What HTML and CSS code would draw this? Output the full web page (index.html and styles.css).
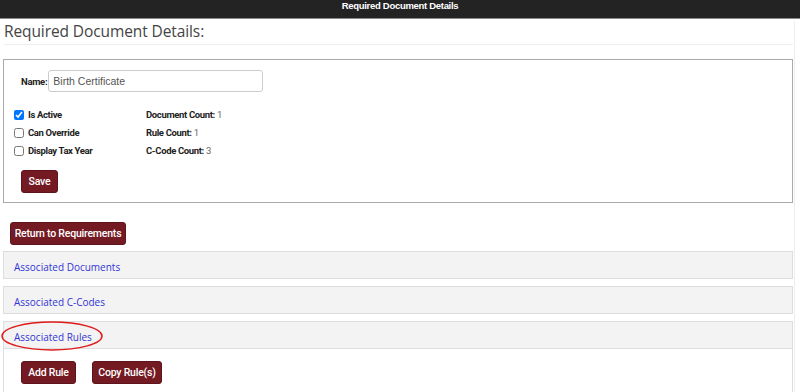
FILE: index.html
```html
<!DOCTYPE html>
<html>
<head>
<meta charset="utf-8">
<link rel="stylesheet" href="styles.css">
</head>
<body>
<header class="topbar">Required Document Details</header>
<main class="page">
  <h1 class="title">Required Document Details:</h1>
  <section class="card">
    <div class="name-row">
      <label class="lbl" for="name">Name:</label>
      <input id="name" class="text-input" type="text" value="Birth Certificate">
    </div>
    <div class="grid">
      <div class="col">
        <label class="check"><input type="checkbox" checked><span>Is Active</span></label>
        <label class="check"><input type="checkbox"><span>Can Override</span></label>
        <label class="check"><input type="checkbox"><span>Display Tax Year</span></label>
      </div>
      <div class="col counts">
        <div class="count"><b>Document Count:</b> 1</div>
        <div class="count"><b>Rule Count:</b> 1</div>
        <div class="count"><b>C-Code Count:</b> 3</div>
      </div>
    </div>
    <button class="btn save">Save</button>
  </section>
  <button class="btn ret">Return to Requirements</button>
  <div class="panel"><div class="panel-head"><a href="#">Associated Documents</a></div></div>
  <div class="panel"><div class="panel-head"><a href="#">Associated C-Codes</a></div></div>
  <div class="panel open">
    <div class="panel-head"><a href="#">Associated Rules</a>
      <svg class="circle" width="104" height="32" viewBox="0 0 104 32"><ellipse cx="51" cy="16" rx="50" ry="14" fill="none" stroke="#e01b1b" stroke-width="1.5"/></svg>
    </div>
    <div class="panel-body">
      <button class="btn add">Add Rule</button>
      <button class="btn copy">Copy Rule(s)</button>
    </div>
  </div>
</main>
</body>
</html>
```
FILE: styles.css
```css
html, body { margin: 0; padding: 0; background: #fff; }
body { font-family: "Open Sans", "Liberation Sans", sans-serif; color: #333; overflow: hidden; height: 392px; }
.topbar {
  height: 18px; line-height: 18px; background: #232323; color: #fff;
  text-align: center; font: bold 9.5px "Liberation Sans", sans-serif;
  border-bottom: 1px solid #8a8a8a; letter-spacing: -0.3px;
}
.page { width: 790px; padding-left: 3px; padding-right: 1px; border-right: 1px solid #eee; height: 373px; }
.title {
  margin: 2px 0 0 1px; padding: 0 0 3px; font-weight: 400; font-size: 15.5px; line-height: 20px;
  color: #444; border-bottom: 1px solid #eee; letter-spacing: -0.1px;
}
.card { margin: 14px 0 0 0; border: 1px solid #aaa; padding: 10px 0 9px 17px; }
.name-row { display: flex; align-items: center; gap: 1px; }
.lbl { font: bold 9.5px Roboto, "Liberation Sans", sans-serif; letter-spacing: -0.3px; color: #222; }
.text-input {
  width: 205px; height: 20px; padding: 0 4px; border: 1px solid #ccc; border-radius: 3px;
  font: 10.5px "Liberation Sans", sans-serif; color: #555; box-sizing: content-box; margin: 0;
}
.grid { display: flex; margin: 14px 0 0 -7px; }
.col { display: flex; flex-direction: column; }
.col:first-child { width: 132px; }
.check { display: flex; align-items: center; height: 18px; font: bold 9.5px/18px Roboto, "Liberation Sans", sans-serif; letter-spacing: -0.35px; color: #222; }
.check input { width: 10px; height: 10px; margin: 0 4px 0 0; }
.count { height: 18px; font: 9.5px/18px Roboto, "Liberation Sans", sans-serif; letter-spacing: -0.35px; color: #666; }
.count b { color: #222; }
.btn {
  display: block; background: #741a23; color: #fff; border: 1px solid #5d141c; border-radius: 3px;
  height: 23px; padding: 0; white-space: nowrap; text-align: center;
  font: 500 10.5px Roboto, "Liberation Sans", sans-serif; letter-spacing: -0.2px; margin: 0; cursor: pointer;
}
.save { margin-top: 10px; width: 37px; }
.ret { margin: 19px 0 6px 7px; width: 116px; }
.panel { border: 1px solid #ddd; margin-bottom: 7px; }
.panel-head { position: relative; height: 26px; line-height: 26px; background: #f3f3f3; padding-left: 10px; }
.panel-head a { color: #3333d6; text-decoration: none; font: 10px "Open Sans", "Liberation Sans", sans-serif; }
.panel.open { border-bottom: 0; }
.panel.open .panel-head { border-bottom: 1px solid #ddd; }
.panel-body { padding: 12px 0 0 17px; display: flex; gap: 16px; height: 40px; }
.add { width: 55px; }
.copy { width: 70px; }
.circle { position: absolute; left: -3px; top: -2px; }
```
